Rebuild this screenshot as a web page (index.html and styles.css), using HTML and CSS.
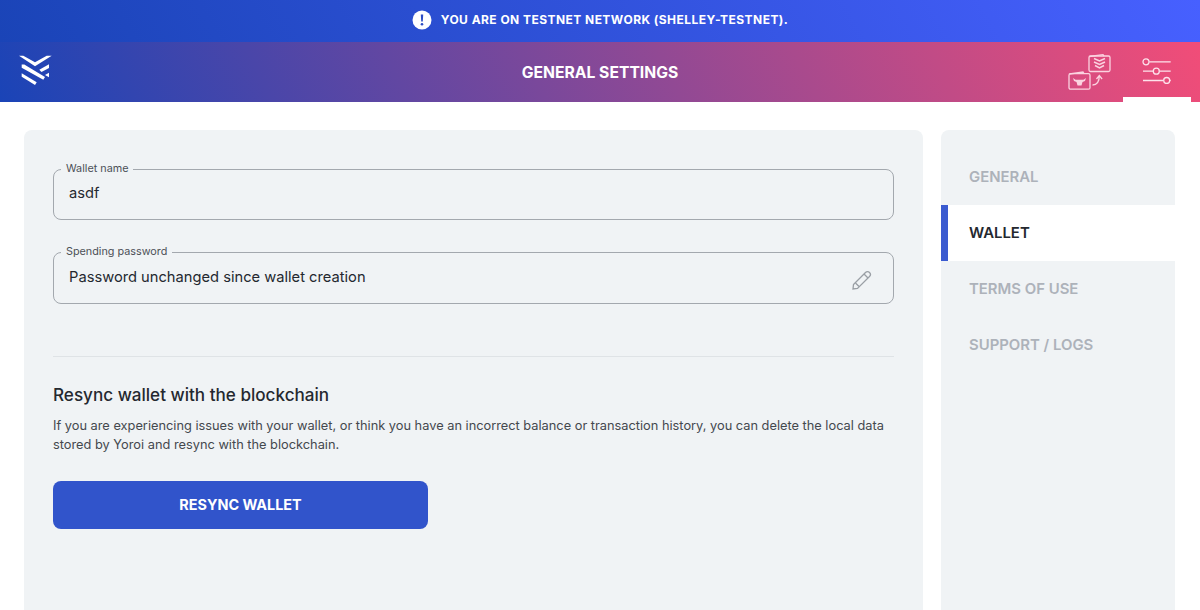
FILE: index.html

```html
<!DOCTYPE html>
<html lang="en">
  <head>
    <meta charset="utf-8" />
    <meta name="viewport" content="width=device-width, initial-scale=1" />
    <title>General Settings</title>
    <link rel="stylesheet" href="styles.css">
  </head>
  <body>
    <div class="banner">
      <svg class="banner-icon" width="20" height="20" viewBox="0 0 20 20">
        <circle cx="10" cy="10" r="9.500" fill="#fff" />
        <path d="M8.800 4.500h2.400l-.4 7h-1.600z" fill="#2b4cc4" />
        <circle cx="10" cy="14.200" r="1.300" fill="#2b4cc4" />
      </svg>
      <span>YOU ARE ON TESTNET NETWORK (SHELLEY-TESTNET).</span>
    </div>

    <header class="topbar">
      <svg class="logo" width="33" height="31" viewBox="0 0 33 31" fill="#fff">
        <path d="M0 .7h4.300L16 7.300 27.700 .7h5L16 11.200z" />
        <path d="M2.700 9.500h2.600L26 22l-1.700 2.800L2.700 12.800z" />
        <path d="M2.700 18.300l15 9-1.700 2.700L2.700 21.800z" />
        <path d="M20.300 14.800l9.700-5.500v3.600l-7.500 4z" />
        <path d="M26 20l4-2.300v4.600z" />
      </svg>
      <h1 class="topbar-title">GENERAL SETTINGS</h1>
      <div class="topbar-actions">
        <a class="action action-wallets">
          <svg width="43" height="37" viewBox="0 0 43 37" fill="none" stroke="#fbd3e0" stroke-width="1.300">
            <path d="M21.500 2.500L35 .7 36 2" />
            <rect x="21" y="2" width="21" height="15.500" rx="1.500" />
            <path d="M26 4.500l5.500 2.500 5.500-2.500M26 8l5.500 2.500L37 8M27 11.500l4.500 2.500 4.500-2.500" stroke-width="1.500" />
            <path d="M1.500 20L15 18 16 19.500" />
            <rect x="1" y="19.700" width="21" height="15.500" rx="1.500" />
            <path d="M5 24l2.500 1.800h8L18 24l-1 3-2.500 1-1 3.500h-4l-1-3.500L6 27z" fill="#fbd3e0" stroke="none" />
            <path d="M24.500 31c4.500 0 6.800-3 6.800-9.500M28.500 25l2.800-3.500 2.800 3.500" />
          </svg>
        </a>
        <a class="action action-settings">
          <svg width="29" height="26" viewBox="0 0 29 26" fill="none" stroke="#fde3ec" stroke-width="1.300">
            <path d="M7.300 3.800h21.400M1 13.200h10M17.600 13.200h11.100M1 22.500h20.400M28 22.500h.7" />
            <circle cx="4" cy="3.800" r="3" />
            <circle cx="14.300" cy="13.200" r="3" />
            <circle cx="24.700" cy="22.500" r="3" />
          </svg>
        </a>
      </div>
    </header>

    <div class="page">
      <main class="card">
        <label class="field">
          <span class="field-label">Wallet name</span>
          <span class="field-value">asdf</span>
        </label>
        <label class="field">
          <span class="field-label">Spending password</span>
          <span class="field-value">Password unchanged since wallet creation</span>
          <svg class="field-icon" width="20" height="20" viewBox="0 0 20 20" fill="none" stroke="#9a9fa5" stroke-width="1.300">
            <path d="M1.500 14.500L13.500 2.500a2.500 2.500 0 0 1 4 4L5.500 18.500l-4.500 .5z" />
            <path d="M12 4l4 4M3.500 13l3.500 3.500" />
          </svg>
        </label>

        <hr class="divider" />

        <h2 class="section-title">Resync wallet with the blockchain</h2>
        <p class="section-text">If you are experiencing issues with your wallet, or think you have an incorrect balance or transaction history, you can delete the local data stored by Yoroi and resync with the blockchain.</p>
        <button class="button">RESYNC WALLET</button>
      </main>

      <nav class="sidemenu">
        <a class="sidemenu-item">GENERAL</a>
        <a class="sidemenu-item active">WALLET</a>
        <a class="sidemenu-item">TERMS OF USE</a>
        <a class="sidemenu-item">SUPPORT / LOGS</a>
      </nav>
    </div>
  </body>
</html>
```

FILE: styles.css

```css
* {
  box-sizing: border-box;
  margin: 0;
  padding: 0;
}

html,
body {
  height: 100%;
  overflow: hidden;
}

body {
  font-family: Inter, "Noto Sans", sans-serif;
  background-color: #fff;
  color: #24282f;
}

.banner {
  height: 42px;
  display: flex;
  align-items: center;
  justify-content: center;
  gap: 9px;
  padding-bottom: 3px;
  background: linear-gradient(61deg, #1a44b7, #4760ff);
  color: #fff;
  font-size: 12px;
  font-weight: 700;
  letter-spacing: 0.45px;
}

.topbar {
  height: 60px;
  display: flex;
  align-items: center;
  position: relative;
  background: linear-gradient(64deg, #1a44b7, #f14d78);
  padding-left: 19px;
}

.logo {
  margin-top: -3px;
}

.topbar-title {
  position: absolute;
  left: 0;
  right: 0;
  text-align: center;
  color: #fff;
  font-size: 15.700px;
  font-weight: 700;
  pointer-events: none;
}

.topbar-actions {
  margin-left: auto;
  display: flex;
  height: 100%;
  padding-right: 9px;
}

.action {
  display: flex;
  align-items: center;
  justify-content: center;
}

.action-wallets {
  width: 68px;
  padding-top: 1px;
}

.action-settings {
  width: 68px;
  padding-top: 3px;
  padding-right: 2px;
  border-bottom: 5px solid #fff;
}

.page {
  display: flex;
  gap: 18px;
  padding: 28px 25px 0 24px;
  height: 508px;
}

.card {
  flex: 1;
  background-color: #f0f3f5;
  border-radius: 8px 8px 0 0;
  padding: 39px 29px 0;
}

.field {
  display: flex;
  align-items: center;
  position: relative;
  height: 52px;
  margin-bottom: 31px;
  padding: 0 15px;
  border: 1px solid #a3a8ae;
  border-radius: 8px;
  font-size: 14.700px;
}

.field:first-child {
  height: 51px;
  margin-bottom: 32px;
}

.field-label {
  position: absolute;
  top: -8px;
  left: 7px;
  padding: 0 5px;
  background-color: #f0f3f5;
  color: #4c5057;
  font-size: 10.800px;
  line-height: 13px;
}

.field-value {
  color: #24282f;
  margin-bottom: 3px;
}

.field-icon {
  margin-left: auto;
  margin-right: 6px;
  margin-top: 3px;
}

.divider {
  border: 0;
  border-top: 1px solid #dfe3e6;
  margin-top: 52px;
}

.section-title {
  margin-top: 28px;
  font-size: 17.100px;
  line-height: 20px;
  font-weight: 500;
}

.section-text {
  margin-top: 11px;
  font-size: 12.800px;
  line-height: 19px;
  color: #44484e;
}

.button {
  display: block;
  width: 375px;
  height: 48px;
  margin-top: 27px;
  padding-bottom: 2px;
  border: 0;
  border-radius: 8px;
  background-color: #3154cb;
  color: #fff;
  font-family: inherit;
  font-size: 14.400px;
  font-weight: 700;
}

.sidemenu {
  width: 234px;
  background-color: #f0f3f5;
  border-radius: 8px 8px 0 0;
  padding-top: 19px;
}

.sidemenu-item {
  display: flex;
  align-items: center;
  height: 56px;
  padding-bottom: 1px;
  padding-left: 28px;
  color: #adb2ba;
  font-size: 14.900px;
  font-weight: 600;
}

.sidemenu-item.active {
  background-color: #fff;
  border-left: 7px solid #3b5bd0;
  padding-left: 21px;
  color: #24282f;
}
```
